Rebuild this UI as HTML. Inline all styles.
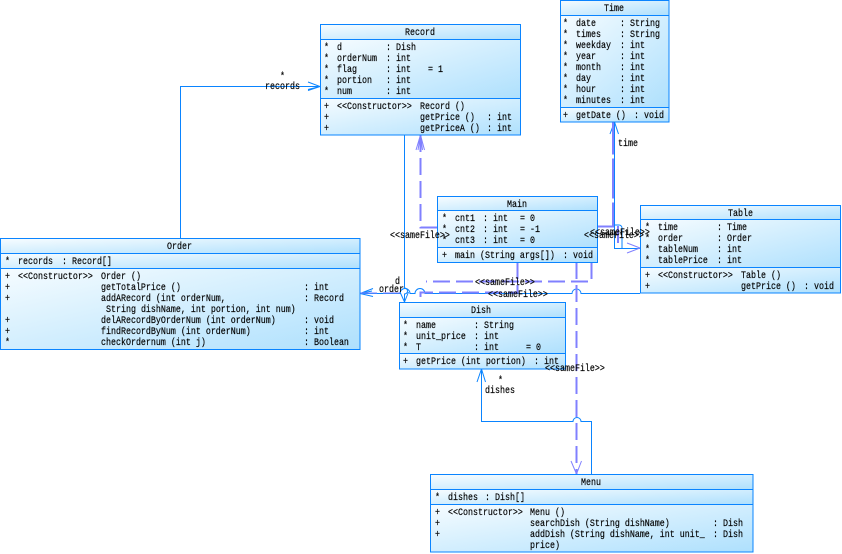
<!DOCTYPE html>
<html><head><meta charset="utf-8"><style>
html,body{margin:0;padding:0;background:#fff;width:842px;height:554px;overflow:hidden}
svg{display:block}
text{font-family:"Liberation Mono",monospace;font-size:10px;fill:#000;stroke:#000;stroke-width:.18;white-space:pre}
.b{fill:none;stroke:#0a84ff;stroke-width:1}
.p{fill:none;stroke:#8080ff;stroke-width:2;stroke-dasharray:17 6}
.a{fill:none;stroke:#8080ff;stroke-width:1}
.box{stroke:#0a84ff;stroke-width:1;fill:none}
.s{stroke:#0a84ff;stroke-width:1}
</style></head><body>
<svg width="842" height="554" viewBox="0 0 842 554" xmlns="http://www.w3.org/2000/svg">
<defs><linearGradient id="g" x1="0" y1="0" x2="1" y2="1"><stop offset="0" stop-color="#f6fcff"/><stop offset="1" stop-color="#aee0fd"/></linearGradient></defs>

<!-- connectors -->
<path class="b" d="M180.500 238V86.500H320M308 82l12 4.500l-12 3M308 90.500l12-4"/>
<path class="b" d="M404.500 135V288a3 3 0 0 1 0 6V302M400 292l4.500 10l4-10"/>
<path class="b" d="M640 293.500H581a4.500 4.500 0 0 0-9 0H425a5 5 0 0 0-10 0H410a5 5 0 0 0-10 0H360M373 288.500l-13 5l13 3M372 291l-12 2.500"/>
<path class="b" d="M591.500 474V421.500H581a4 4 0 0 0-8 0H481.500V369M477 382l4.500-13l4 13"/>
<path class="b" d="M614.500 122V248.500H640M610 134l4.500-12l4 12"/>
<path class="b" d="M597 227h14M614 225h5a3 3 0 0 1 3 3v20"/>

<path class="p" d="M420.500 135V227.500H437"/>
<path class="a" d="M416 150l4.500-15l4 15M418 150l2.500-15l2 15" stroke-width="1.500"/>
<path class="p" d="M591.500 262V281.500H426"/>
<path class="p" d="M517.500 262V292.500H420.500V302"/>
<path class="p" d="M576.500 262V474"/>
<path class="a" d="M571 461l5.500 13l5-13"/>
<path class="p" d="M597 226.500H613V122" style="stroke-dasharray:40 4"/>
<path class="p" d="M618 226V248" stroke-dasharray="none"/>
<path class="a" d="M627 243l13 5l-13 5"/>
<path class="p" d="M360 293H404" stroke-dasharray="none" style="stroke:#8080ff;stroke-width:1"/>

<!-- Record -->
<rect x="320.500" y="25" width="200" height="14.500" fill="url(#g)"/><rect x="320.500" y="39.500" width="200" height="59" fill="url(#g)"/><rect x="320.500" y="98.500" width="200" height="36.500" fill="url(#g)"/>
<rect class="box" x="320.500" y="24.500" width="200" height="110.500"/><path class="s" d="M320 39.500H521M320 98.500H521"/>
<text transform="translate(405,35) scale(.8333,1)">Record</text>
<text transform="translate(324,50) scale(.8333,1)">*</text><text transform="translate(337,50) scale(.8333,1)">d</text><text transform="translate(386,50) scale(.8333,1)">: Dish</text>
<text transform="translate(324,61) scale(.8333,1)">*</text><text transform="translate(337,61) scale(.8333,1)">orderNum</text><text transform="translate(386,61) scale(.8333,1)">: int</text>
<text transform="translate(324,72) scale(.8333,1)">*</text><text transform="translate(337,72) scale(.8333,1)">flag</text><text transform="translate(386,72) scale(.8333,1)">: int</text><text transform="translate(428,72) scale(.8333,1)">= 1</text>
<text transform="translate(324,83) scale(.8333,1)">*</text><text transform="translate(337,83) scale(.8333,1)">portion</text><text transform="translate(386,83) scale(.8333,1)">: int</text>
<text transform="translate(324,94) scale(.8333,1)">*</text><text transform="translate(337,94) scale(.8333,1)">num</text><text transform="translate(386,94) scale(.8333,1)">: int</text>
<text transform="translate(324,109) scale(.8333,1)">+</text><text transform="translate(337,109) scale(.8333,1)">&lt;&lt;Constructor&gt;&gt;</text><text transform="translate(420,109) scale(.8333,1)">Record ()</text>
<text transform="translate(324,120) scale(.8333,1)">+</text><text transform="translate(420,120) scale(.8333,1)">getPrice ()</text><text transform="translate(487,120) scale(.8333,1)">: int</text>
<text transform="translate(324,131) scale(.8333,1)">+</text><text transform="translate(420,131) scale(.8333,1)">getPriceA ()</text><text transform="translate(487,131) scale(.8333,1)">: int</text>

<!-- Time -->
<rect x="560.500" y="0" width="108.500" height="15" fill="url(#g)"/><rect x="560.500" y="15" width="108.500" height="92" fill="url(#g)"/><rect x="560.500" y="107" width="108.500" height="15" fill="url(#g)"/>
<rect class="box" x="560.500" y=".5" width="108.500" height="121.500"/><path class="s" d="M560 15.500H669M560 107.500H669"/>
<text transform="translate(604,11) scale(.8333,1)">Time</text>
<text transform="translate(563,26) scale(.8333,1)">*</text><text transform="translate(576,26) scale(.8333,1)">date</text><text transform="translate(620,26) scale(.8333,1)">: String</text>
<text transform="translate(563,37) scale(.8333,1)">*</text><text transform="translate(576,37) scale(.8333,1)">times</text><text transform="translate(620,37) scale(.8333,1)">: String</text>
<text transform="translate(563,48) scale(.8333,1)">*</text><text transform="translate(576,48) scale(.8333,1)">weekday</text><text transform="translate(620,48) scale(.8333,1)">: int</text>
<text transform="translate(563,59) scale(.8333,1)">*</text><text transform="translate(576,59) scale(.8333,1)">year</text><text transform="translate(620,59) scale(.8333,1)">: int</text>
<text transform="translate(563,70) scale(.8333,1)">*</text><text transform="translate(576,70) scale(.8333,1)">month</text><text transform="translate(620,70) scale(.8333,1)">: int</text>
<text transform="translate(563,81) scale(.8333,1)">*</text><text transform="translate(576,81) scale(.8333,1)">day</text><text transform="translate(620,81) scale(.8333,1)">: int</text>
<text transform="translate(563,92) scale(.8333,1)">*</text><text transform="translate(576,92) scale(.8333,1)">hour</text><text transform="translate(620,92) scale(.8333,1)">: int</text>
<text transform="translate(563,103) scale(.8333,1)">*</text><text transform="translate(576,103) scale(.8333,1)">minutes</text><text transform="translate(620,103) scale(.8333,1)">: int</text>
<text transform="translate(563,118) scale(.8333,1)">+</text><text transform="translate(576,118) scale(.8333,1)">getDate ()</text><text transform="translate(634,118) scale(.8333,1)">: void</text>

<!-- Order -->
<rect x=".5" y="239" width="359.500" height="14.500" fill="url(#g)"/><rect x=".5" y="253.500" width="359.500" height="15" fill="url(#g)"/><rect x=".5" y="268.500" width="359.500" height="81" fill="url(#g)"/>
<rect class="box" x=".5" y="238.500" width="359.500" height="111"/><path class="s" d="M0 253.500H360M0 268.500H360"/>
<text transform="translate(167,249) scale(.8333,1)">Order</text>
<text transform="translate(5,264) scale(.8333,1)">*</text><text transform="translate(18,264) scale(.8333,1)">records</text><text transform="translate(62,264) scale(.8333,1)">: Record[]</text>
<text transform="translate(5,279) scale(.8333,1)">+</text><text transform="translate(18,279) scale(.8333,1)">&lt;&lt;Constructor&gt;&gt;</text><text transform="translate(101,279) scale(.8333,1)">Order ()</text>
<text transform="translate(5,290) scale(.8333,1)">+</text><text transform="translate(101,290) scale(.8333,1)">getTotalPrice ()</text><text transform="translate(304,290) scale(.8333,1)">: int</text>
<text transform="translate(5,301) scale(.8333,1)">+</text><text transform="translate(101,301) scale(.8333,1)">addARecord (int orderNum,</text><text transform="translate(304,301) scale(.8333,1)">: Record</text>
<text transform="translate(106,312) scale(.8333,1)">String dishName, int portion, int num)</text>
<text transform="translate(5,323) scale(.8333,1)">+</text><text transform="translate(101,323) scale(.8333,1)">delARecordByOrderNum (int orderNum)</text><text transform="translate(304,323) scale(.8333,1)">: void</text>
<text transform="translate(5,334) scale(.8333,1)">+</text><text transform="translate(101,334) scale(.8333,1)">findRecordByNum (int orderNum)</text><text transform="translate(304,334) scale(.8333,1)">: int</text>
<text transform="translate(5,345) scale(.8333,1)">*</text><text transform="translate(101,345) scale(.8333,1)">checkOrdernum (int j)</text><text transform="translate(304,345) scale(.8333,1)">: Boolean</text>

<!-- Main -->
<rect x="437.500" y="197" width="160" height="14" fill="url(#g)"/><rect x="437.500" y="211" width="160" height="37" fill="url(#g)"/><rect x="437.500" y="248" width="160" height="14.500" fill="url(#g)"/>
<rect class="box" x="437.500" y="196.500" width="160" height="66"/><path class="s" d="M437 210.500H597M437 247.500H597"/>
<text transform="translate(507,207) scale(.8333,1)">Main</text>
<text transform="translate(442,221) scale(.8333,1)">*</text><text transform="translate(455,221) scale(.8333,1)">cnt1</text><text transform="translate(483,221) scale(.8333,1)">: int</text><text transform="translate(520,221) scale(.8333,1)">= 0</text>
<text transform="translate(442,232) scale(.8333,1)">*</text><text transform="translate(455,232) scale(.8333,1)">cnt2</text><text transform="translate(483,232) scale(.8333,1)">: int</text><text transform="translate(520,232) scale(.8333,1)">= -1</text>
<text transform="translate(442,243) scale(.8333,1)">*</text><text transform="translate(455,243) scale(.8333,1)">cnt3</text><text transform="translate(483,243) scale(.8333,1)">: int</text><text transform="translate(520,243) scale(.8333,1)">= 0</text>
<text transform="translate(442,258) scale(.8333,1)">+</text><text transform="translate(455,258) scale(.8333,1)">main (String args[])</text><text transform="translate(563,258) scale(.8333,1)">: void</text>

<!-- Table -->
<rect x="640.500" y="206" width="200" height="14" fill="url(#g)"/><rect x="640.500" y="220" width="200" height="48" fill="url(#g)"/><rect x="640.500" y="268" width="200" height="25" fill="url(#g)"/>
<rect class="box" x="640.500" y="205.500" width="200" height="87.500"/><path class="s" d="M640 219.500H841M640 267.500H841"/>
<text transform="translate(728,216) scale(.8333,1)">Table</text>
<text transform="translate(645,230) scale(.8333,1)">*</text><text transform="translate(658,230) scale(.8333,1)">time</text><text transform="translate(717,230) scale(.8333,1)">: Time</text>
<text transform="translate(645,241) scale(.8333,1)">*</text><text transform="translate(658,241) scale(.8333,1)">order</text><text transform="translate(717,241) scale(.8333,1)">: Order</text>
<text transform="translate(645,252) scale(.8333,1)">*</text><text transform="translate(658,252) scale(.8333,1)">tableNum</text><text transform="translate(717,252) scale(.8333,1)">: int</text>
<text transform="translate(645,263) scale(.8333,1)">*</text><text transform="translate(658,263) scale(.8333,1)">tablePrice</text><text transform="translate(717,263) scale(.8333,1)">: int</text>
<text transform="translate(645,278) scale(.8333,1)">+</text><text transform="translate(658,278) scale(.8333,1)">&lt;&lt;Constructor&gt;&gt;</text><text transform="translate(741,278) scale(.8333,1)">Table ()</text>
<text transform="translate(645,289) scale(.8333,1)">+</text><text transform="translate(741,289) scale(.8333,1)">getPrice ()</text><text transform="translate(804,289) scale(.8333,1)">: void</text>

<!-- Dish -->
<rect x="399.500" y="303" width="166" height="14.500" fill="url(#g)"/><rect x="399.500" y="317.500" width="166" height="36" fill="url(#g)"/><rect x="399.500" y="353.500" width="166" height="15.500" fill="url(#g)"/>
<rect class="box" x="399.500" y="302.500" width="166" height="66.500"/><path class="s" d="M399 317.500H566M399 353.500H566"/>
<text transform="translate(471,313) scale(.8333,1)">Dish</text>
<text transform="translate(403,328) scale(.8333,1)">*</text><text transform="translate(416,328) scale(.8333,1)">name</text><text transform="translate(474,328) scale(.8333,1)">: String</text>
<text transform="translate(403,339) scale(.8333,1)">*</text><text transform="translate(416,339) scale(.8333,1)">unit_price</text><text transform="translate(474,339) scale(.8333,1)">: int</text>
<text transform="translate(403,350) scale(.8333,1)">*</text><text transform="translate(416,350) scale(.8333,1)">T</text><text transform="translate(474,350) scale(.8333,1)">: int</text><text transform="translate(526,350) scale(.8333,1)">= 0</text>
<text transform="translate(403,364) scale(.8333,1)">+</text><text transform="translate(416,364) scale(.8333,1)">getPrice (int portion)</text><text transform="translate(534,364) scale(.8333,1)">: int</text>

<!-- Menu -->
<rect x="430.500" y="475" width="322.500" height="14.500" fill="url(#g)"/><rect x="430.500" y="489.500" width="322.500" height="15" fill="url(#g)"/><rect x="430.500" y="504.500" width="322.500" height="47.500" fill="url(#g)"/>
<rect class="box" x="430.500" y="474.500" width="322.500" height="77.500"/><path class="s" d="M430 489.500H753M430 504.500H753"/>
<text transform="translate(581,485) scale(.8333,1)">Menu</text>
<text transform="translate(435,500) scale(.8333,1)">*</text><text transform="translate(448,500) scale(.8333,1)">dishes</text><text transform="translate(485,500) scale(.8333,1)">: Dish[]</text>
<text transform="translate(435,515) scale(.8333,1)">+</text><text transform="translate(448,515) scale(.8333,1)">&lt;&lt;Constructor&gt;&gt;</text><text transform="translate(530,515) scale(.8333,1)">Menu ()</text>
<text transform="translate(435,526) scale(.8333,1)">+</text><text transform="translate(530,526) scale(.8333,1)">searchDish (String dishName)</text><text transform="translate(713,526) scale(.8333,1)">: Dish</text>
<text transform="translate(435,537) scale(.8333,1)">+</text><text transform="translate(530,537) scale(.8333,1)">addDish (String dishName, int unit_</text><text transform="translate(713,537) scale(.8333,1)">: Dish</text>
<text transform="translate(530,548) scale(.8333,1)">price)</text>

<!-- labels -->
<text transform="translate(280,79) scale(.8333,1)">*</text>
<text transform="translate(265,89) scale(.8333,1)">records</text>
<text transform="translate(618,146) scale(.8333,1)">time</text>
<text transform="translate(395,284) scale(.8333,1)">d</text>
<text transform="translate(379,292) scale(.8333,1)">order</text>
<text transform="translate(498,383) scale(.8333,1)">*</text>
<text transform="translate(485,393) scale(.8333,1)">dishes</text>
<text transform="translate(390,238) scale(.8333,1)">&lt;&lt;sameFile&gt;&gt;</text>
<text transform="translate(475,285) scale(.8333,1)">&lt;&lt;sameFile&gt;&gt;</text>
<text transform="translate(488,297) scale(.8333,1)">&lt;&lt;sameFile&gt;&gt;</text>
<text transform="translate(545,371) scale(.8333,1)">&lt;&lt;sameFile&gt;&gt;</text>
<text transform="translate(584,238) scale(.8333,1)">&lt;&lt;sameFile&gt;&gt;</text>
<text transform="translate(590,235) scale(.8333,1)">&lt;&lt;sameFile&gt;&gt;</text>
</svg>
</body></html>
